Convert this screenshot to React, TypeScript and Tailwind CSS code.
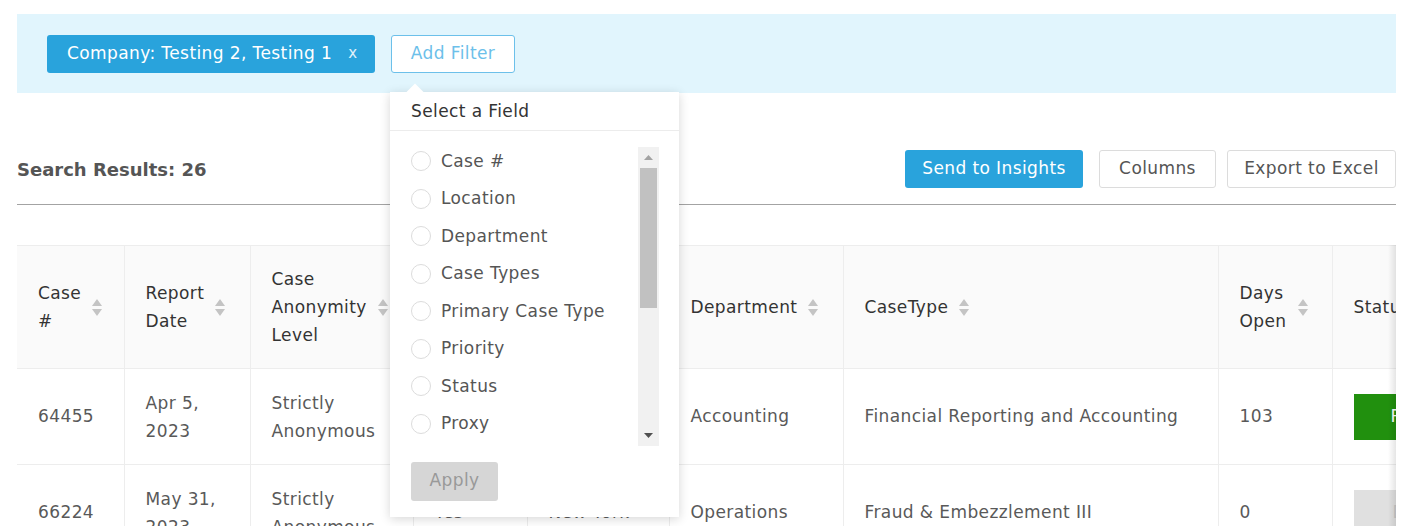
import React from 'react';

const fields = ['Case #', 'Location', 'Department', 'Case Types', 'Primary Case Type', 'Priority', 'Status', 'Proxy'];

type Col = { key: string; label: string[]; width: number; sortable: boolean };

const columns: Col[] = [
    { key: 'caseNo', label: ['Case', '#'], width: 107, sortable: true },
    { key: 'reportDate', label: ['Report', 'Date'], width: 126, sortable: true },
    { key: 'anonymity', label: ['Case', 'Anonymity', 'Level'], width: 163, sortable: true },
    { key: 'proxy', label: ['Proxy'], width: 114, sortable: true },
    { key: 'location', label: ['Location'], width: 142, sortable: true },
    { key: 'department', label: ['Department'], width: 174, sortable: true },
    { key: 'caseType', label: ['CaseType'], width: 375, sortable: true },
    { key: 'daysOpen', label: ['Days', 'Open'], width: 114, sortable: true },
    { key: 'status', label: ['Status'], width: 160, sortable: false },
];

const rows = [
    {
        caseNo: '64455',
        reportDate: ['Apr 5,', '2023'],
        anonymity: ['Strictly', 'Anonymous'],
        proxy: 'No',
        location: 'Chicago',
        department: 'Accounting',
        caseType: 'Financial Reporting and Accounting',
        daysOpen: '103',
        status: 'Pending',
        open: true,
    },
    {
        caseNo: '66224',
        reportDate: ['May 31,', '2023'],
        anonymity: ['Strictly', 'Anonymous'],
        proxy: 'Yes',
        location: 'New York',
        department: 'Operations',
        caseType: 'Fraud & Embezzlement III',
        daysOpen: '0',
        status: 'Draft',
        open: false,
    },
];

function SortIcon() {
    return (
        <svg width="10" height="17" viewBox="0 0 10 17" className="ml-[11px] shrink-0">
            <path d="M5 0 L10 7 L0 7 Z" fill="#c4c4c4" />
            <path d="M0 10 L10 10 L5 17 Z" fill="#c4c4c4" />
        </svg>
    );
}

function Lines({ lines }: { lines: string[] }) {
    return (
        <div className="leading-[28px] whitespace-nowrap">
            {lines.map((l) => (
                <div key={l}>{l}</div>
            ))}
        </div>
    );
}

function FieldDropdown() {
    return (
        <div className="absolute left-[-1px] top-[57px] z-20 w-[289px] bg-white pb-[16px] shadow-[0_2px_10px_rgba(0,0,0,0.16)]">
            {/* caret */}
            <div className="absolute left-[19px] top-[-6px] h-[12px] w-[12px] rotate-45 bg-white" />
            <div className="relative flex h-[39px] items-center border-b border-[#ececec] px-[21px] pt-[3px] text-[17px] text-[#333]">
                Select a Field
            </div>
            <div className="ml-[21px] mr-[20px] mt-[16px] flex h-[299px] overflow-hidden">
                <div className="-mt-[4px] flex-1">
                    {fields.map((f) => (
                        <div key={f} className="flex h-[37.5px] items-center">
                            <span className="h-[20px] w-[20px] rounded-full border-[1.5px] border-[#dcdcdc] bg-white" />
                            <span className="ml-[10px] text-[17px] text-[#555]">{f}</span>
                        </div>
                    ))}
                </div>
                {/* scrollbar */}
                <div className="flex w-[21px] flex-col items-center bg-[#f1f1f1]">
                    <div className="flex h-[21px] items-center justify-center">
                        <svg width="9" height="5" viewBox="0 0 9 5">
                            <path d="M4.5 0 L9 5 L0 5 Z" fill="#a3a3a3" />
                        </svg>
                    </div>
                    <div className="h-[140px] w-[17px] bg-[#c1c1c1]" />
                    <div className="flex-1" />
                    <div className="flex h-[21px] items-center justify-center">
                        <svg width="9" height="5" viewBox="0 0 9 5">
                            <path d="M0 0 L9 0 L4.5 5 Z" fill="#505050" />
                        </svg>
                    </div>
                </div>
            </div>
            <button className="ml-[21px] mt-[16px] h-[39px] w-[87px] rounded-[3px] bg-[#d6d6d6] text-[17px] text-[#999]">
                Apply
            </button>
        </div>
    );
}

export default function App() {
    return (
        <div className="min-h-screen bg-white pt-[14px] font-['DejaVu_Sans',sans-serif] tracking-[0.4px]">
            <div className="ml-[17px] w-[1379px]">
                {/* Filter bar */}
                <div className="flex h-[79px] items-center gap-[16px] bg-[#e1f5fd] pl-[30px]">
                    <div className="flex h-[38px] w-[328px] items-center rounded-[3px] bg-[#29a3dc] pl-[20px] text-[17px] text-white">
                        <span>Company: Testing 2, Testing 1</span>
                        <span className="ml-[16px] text-[15px] text-white/85">x</span>
                    </div>
                    <div className="relative">
                        <button className="h-[38px] w-[124px] rounded-[3px] border border-[#6cc0ea] bg-white text-[17px] text-[#6cc0ea]">
                            Add Filter
                        </button>
                        <FieldDropdown />
                    </div>
                </div>

                {/* Results header */}
                <div className="mt-[57px] flex items-center justify-between border-b border-[#a3a3a3] pb-[16px]">
                    <div className="text-[18px] font-bold tracking-normal text-[#555]">Search Results: 26</div>
                    <div className="flex items-center">
                        <button className="h-[38px] w-[178px] rounded-[3px] bg-[#29a3dc] text-[17px] text-white">
                            Send to Insights
                        </button>
                        <button className="ml-[16px] h-[38px] w-[117px] rounded-[3px] border border-[#dcdcdc] bg-white text-[17px] text-[#555]">
                            Columns
                        </button>
                        <button className="ml-[11px] h-[38px] w-[169px] rounded-[3px] border border-[#dcdcdc] bg-white text-[17px] text-[#555]">
                            Export to Excel
                        </button>
                    </div>
                </div>

                {/* Table */}
                <div className="relative mt-[40px] overflow-hidden">
                    <table className="table-fixed border-collapse text-[17px]" style={{ width: columns.reduce((s, c) => s + c.width, 0) }}>
                        <colgroup>
                            {columns.map((c) => (
                                <col key={c.key} style={{ width: c.width }} />
                            ))}
                        </colgroup>
                        <thead>
                            <tr className="h-[123px] border-t border-[#ededed] bg-[#fafafa] text-[#333]">
                                {columns.map((c) => (
                                    <th key={c.key} className="border-r border-[#ededed] pl-[21px] text-left font-normal">
                                        <div className="flex items-center">
                                            <Lines lines={c.label} />
                                            {c.sortable && <SortIcon />}
                                        </div>
                                    </th>
                                ))}
                            </tr>
                        </thead>
                        <tbody className="text-[#595959]">
                            {rows.map((r) => (
                                <tr key={r.caseNo} className="h-[96px] border-t border-[#ededed]">
                                    <td className="border-r border-[#ededed] pl-[21px]">{r.caseNo}</td>
                                    <td className="border-r border-[#ededed] pl-[21px]">
                                        <Lines lines={r.reportDate} />
                                    </td>
                                    <td className="border-r border-[#ededed] pl-[21px]">
                                        <Lines lines={r.anonymity} />
                                    </td>
                                    <td className="border-r border-[#ededed] pl-[21px]">{r.proxy}</td>
                                    <td className="border-r border-[#ededed] pl-[21px]">{r.location}</td>
                                    <td className="border-r border-[#ededed] pl-[21px]">{r.department}</td>
                                    <td className="whitespace-nowrap border-r border-[#ededed] pl-[21px]">{r.caseType}</td>
                                    <td className="border-r border-[#ededed] pl-[21px]">{r.daysOpen}</td>
                                    <td className="border-r border-[#ededed] pl-[21px]">
                                        <div
                                            className={
                                                r.open
                                                    ? 'flex h-[46px] w-[130px] items-center bg-[#21900e] pl-[37px] text-white'
                                                    : 'flex h-[46px] w-[130px] items-center bg-[#e0e0e0] pl-[39px] text-[#c8c8c8]'
                                            }
                                        >
                                            {r.status}
                                        </div>
                                    </td>
                                </tr>
                            ))}
                        </tbody>
                    </table>
                    {/* right edge fade where the table is clipped */}
                    <div className="pointer-events-none absolute bottom-0 right-0 top-0 w-[8px] bg-gradient-to-l from-black/10 to-transparent" />
                </div>
            </div>
        </div>
    );
}
